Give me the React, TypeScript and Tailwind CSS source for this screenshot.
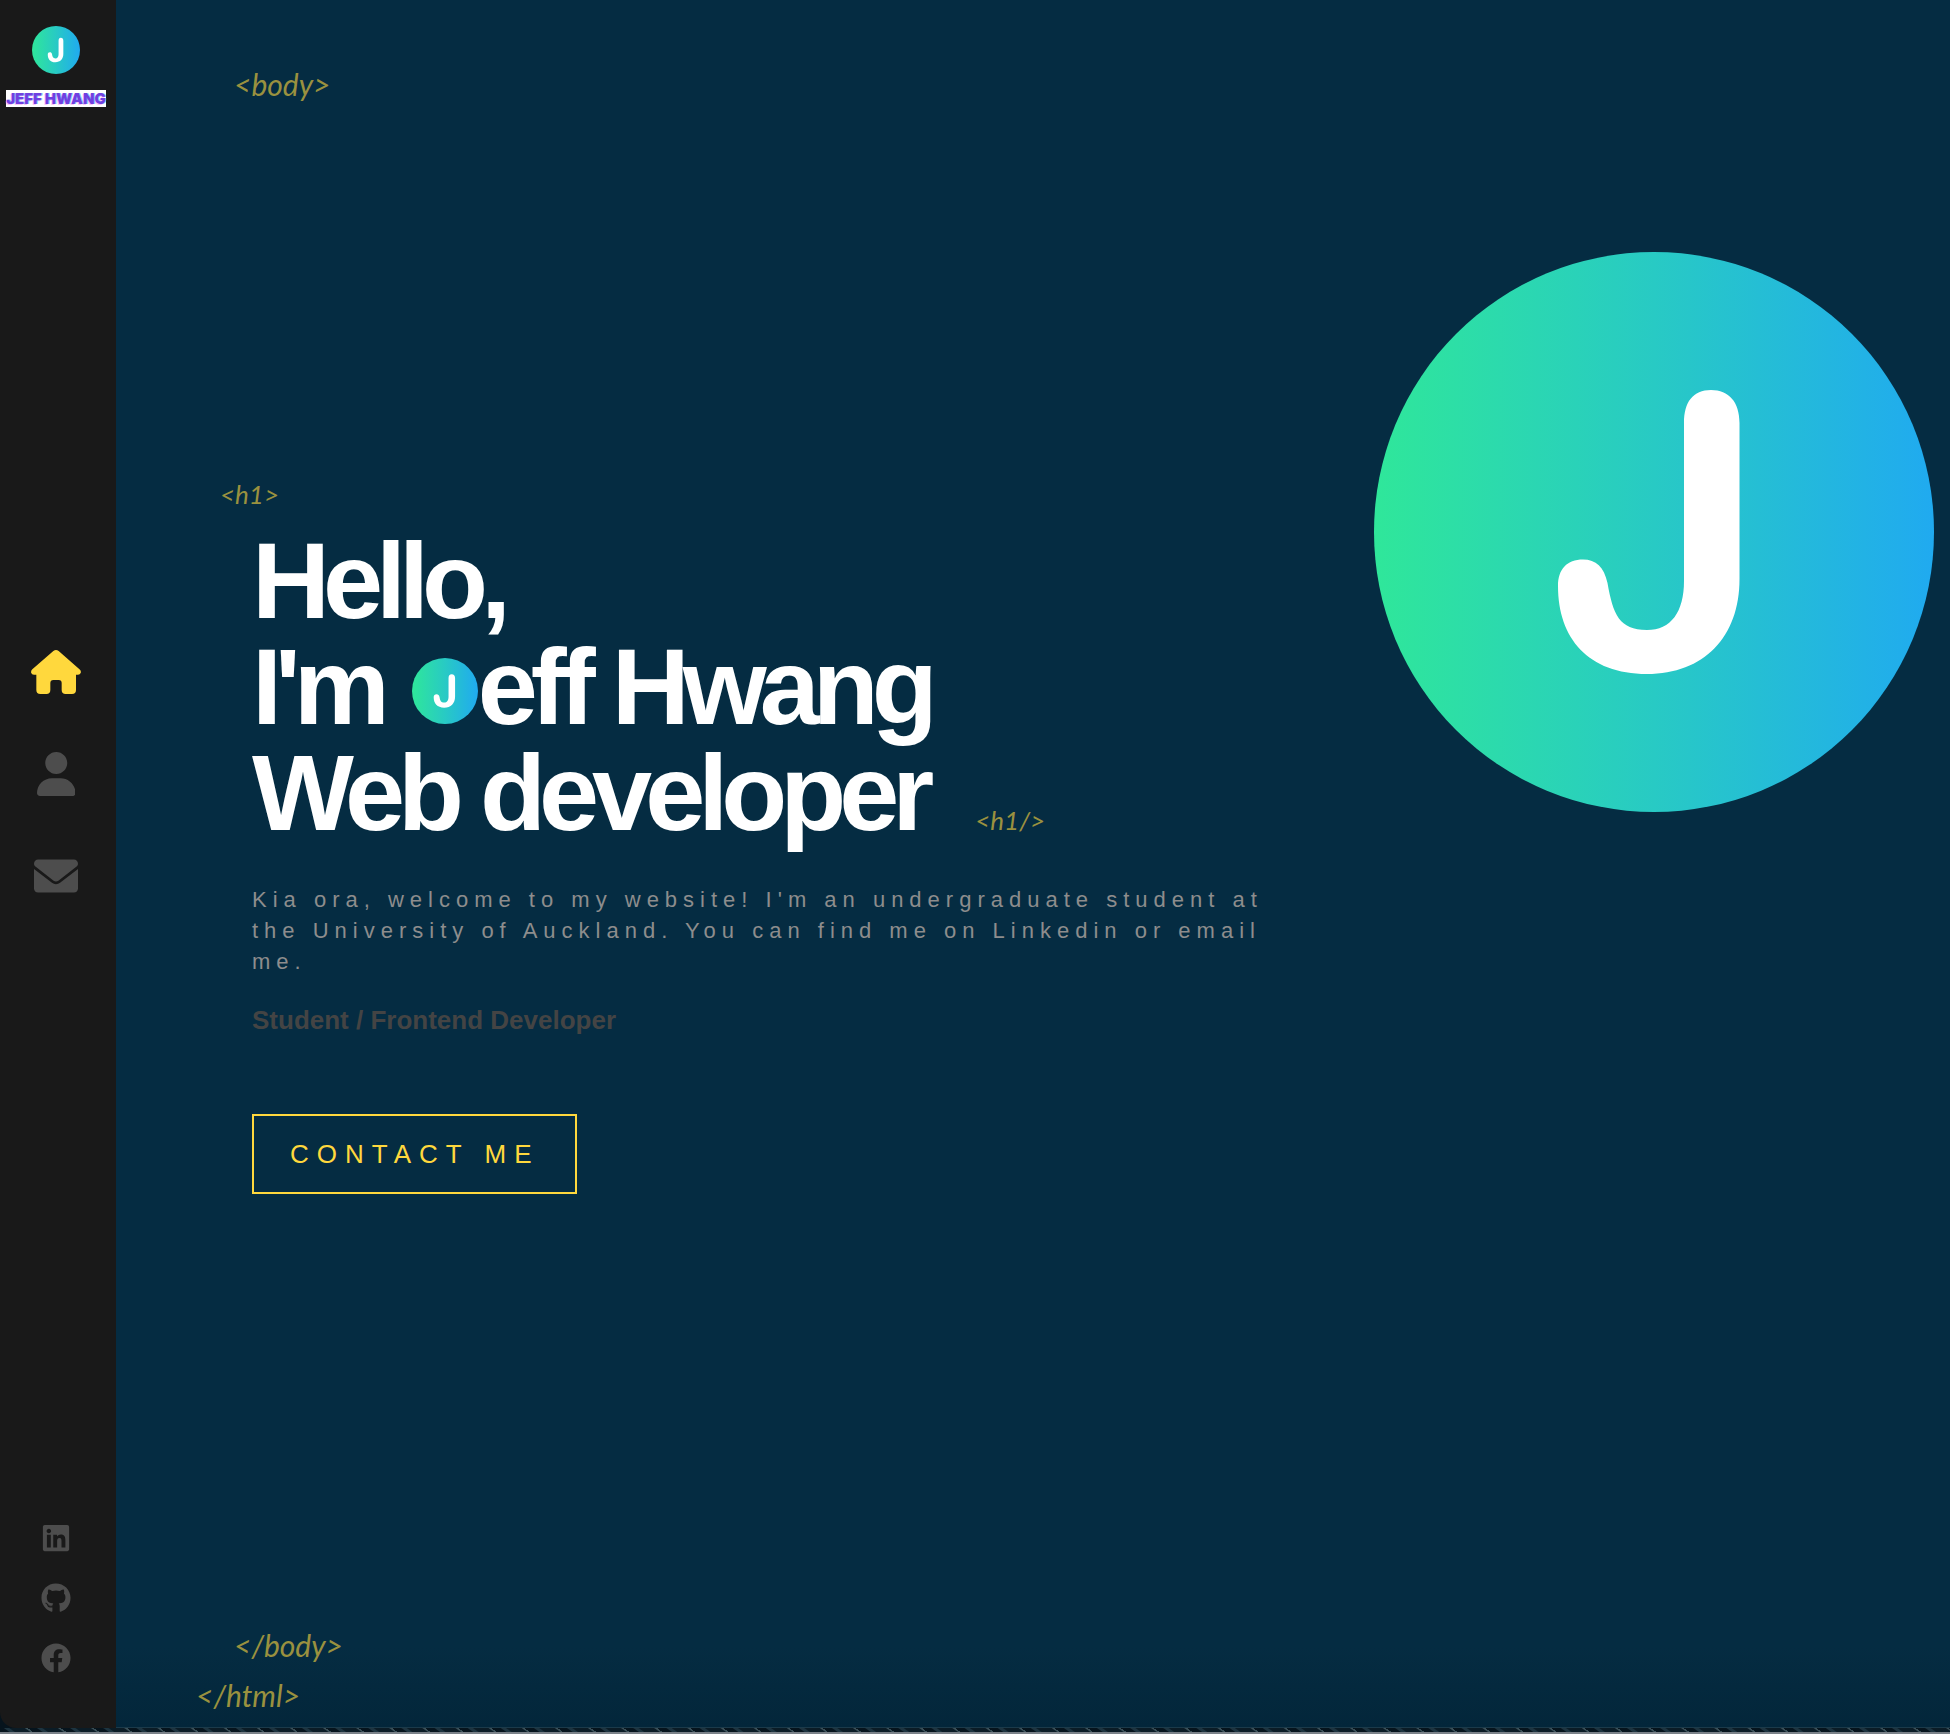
import type { ReactNode } from "react";
import { useId } from "react";
import { FaFacebook, FaGithub, FaLinkedin } from "react-icons/fa";

function Logo({ className }: { className: string }) {
  const id = useId();
  return (
    <svg viewBox="0 0 560 560" role="img" aria-label="J" className={className}>
      <defs>
        <linearGradient id={id} x1="0" y1="0" x2="1" y2="0">
          <stop offset="0" stopColor="#2fe79a" />
          <stop offset="0.5" stopColor="#28cac4" />
          <stop offset="1" stopColor="#20aaf0" />
        </linearGradient>
      </defs>
      <circle cx="280" cy="280" r="280" fill={`url(#${id})`} />
      <path
        fill="#fff"
        d="M337 138C355 138 365.500 150 365.500 171V327C365.500 385 330 422 273 422C214 422 184 386 184 334C184 317 193 307.500 209 307.500C222 307.500 230 315 233.500 331C239 362 245 378 273 378C297 378 310 360 310 329V171C310 150 319 138 337 138Z"
      />
    </svg>
  );
}

function Tag({ children, className = "" }: { children: ReactNode; className?: string }) {
  return (
    <span className={`font-['Lato'] font-normal italic tracking-normal text-[#9a913f] ${className}`}>
      {children}
    </span>
  );
}

const navItems = [
  {
    label: "Home",
    color: "text-[#ffd83d]",
    viewBox: "93 93 150 132",
    path: "M160 96Q168 90 176 96L240 152Q244 157 242 162Q240 167 234 167H228V213Q228 225 216 225H197Q185 225 185 213V192Q185 183 176 183H160Q151 183 151 192V213Q151 225 139 225H121Q109 225 109 213V167H102Q95 167 93.500 161Q92 156 97 151Z",
  },
  {
    label: "About",
    color: "text-[#4d4d4d]",
    viewBox: "0 0 448 512",
    path: "M224 256c70.700 0 128-57.310 128-128S294.700 0 224 0 96 57.310 96 128s57.300 128 128 128zM274.700 304H173.300C77.610 304 0 381.600 0 477.300 0 496.500 15.520 512 34.660 512h378.700C432.500 512 448 496.500 448 477.300 448 381.600 370.400 304 274.700 304z",
  },
  {
    label: "Contact",
    color: "text-[#4d4d4d]",
    viewBox: "0 0 512 512",
    path: "M256 352c-16.530 0-33.060-5.422-47.160-16.410L0 173.200V400c0 26.500 21.490 48 48 48h416c26.510 0 48-21.490 48-48V173.200L303.200 335.600C289.100 346.600 272.500 352 256 352zM16.290 145.300l212.200 165.100c16.190 12.600 38.870 12.600 55.060 0l212.200-165.100C505.100 137.300 512 125 512 112c0-26.510-21.490-48-48-48H48C21.490 64 0 85.490 0 112c0 13 6.010 25.300 16.290 33.300z",
  },
];

const socials = [
  { label: "LinkedIn", Icon: FaLinkedin },
  { label: "GitHub", Icon: FaGithub },
  { label: "Facebook", Icon: FaFacebook },
];

function Sidebar() {
  return (
    <aside className="flex w-[116px] shrink-0 flex-col rounded-bl-2xl bg-[#191919] pr-1">
      <div className="flex flex-1 flex-col">
        <a href="#home" className="flex flex-col items-center gap-4 pt-[26px]">
          <Logo className="size-12" />
          <span className="flex h-[17px] w-[100px] items-center justify-center bg-white font-['Inter'] text-[15px] leading-none font-black whitespace-nowrap text-[#7040e0] [text-shadow:1px_0_0_#38b6ff99,-1px_1px_0_#f06bf066]">
            JEFF HWANG
          </span>
        </a>
      </div>
      <nav className="mb-35 flex flex-col items-center">
        {navItems.map(({ label, color, viewBox, path }) => (
          <a key={label} href={`#${label.toLowerCase()}`} aria-label={label} className={`flex h-[102px] items-center ${color}`}>
            <svg viewBox={viewBox} fill="currentColor" className="h-11 w-auto">
              <path d={path} />
            </svg>
          </a>
        ))}
      </nav>
      <div className="flex flex-1 flex-col items-center justify-end pb-10">
        {socials.map(({ label, Icon }) => (
          <a key={label} href={`#${label.toLowerCase()}`} aria-label={label} className="flex h-[60px] items-center text-[#4d4d4d]">
            <Icon size={30} />
          </a>
        ))}
      </div>
    </aside>
  );
}

export default function App() {
  return (
    <div className="flex min-h-screen flex-col bg-[#06141d] font-['Liberation_Sans',sans-serif]">
      <div className="flex flex-1">
        <Sidebar />
        <main className="flex min-w-0 flex-1 flex-col border-b border-[#1b3a4a] bg-[#052c42] bg-[linear-gradient(to_top,#03263a,transparent_80px)] pt-16 pr-4 pb-3 pl-20">
          <Tag className="ml-[38px] text-[30px] leading-10">&lt;body&gt;</Tag>
          <div className="mt-[148px] flex items-start justify-between gap-8">
            <section className="flex max-w-[1100px] flex-col items-start pt-[222px] pl-14">
              <Tag className="-ml-8 text-[26px] leading-10">&lt;h1&gt;</Tag>
              <h1 className="mt-3.5 text-[108px] leading-[106px] font-bold tracking-[-7px] whitespace-nowrap text-white">
                Hello,
                <br />
                I'm <Logo className="ml-1.5 inline-block size-[66px] align-baseline" />
                eff Hwang
                <br />
                Web developer
                <Tag className="ml-12 text-[26px] leading-10">&lt;h1/&gt;</Tag>
              </h1>
              <p className="mt-[38px] text-[22px] leading-[31px] tracking-[6px] text-[#8d8d8d]">
                Kia ora, welcome to my website! I'm an undergraduate student at the University of Auckland. You can find
                me on Linkedin or email me.
              </p>
              <h2 className="mt-[27px] text-[26px] leading-8 font-bold text-[#444]">Student / Frontend Developer</h2>
              <a
                href="#contact"
                className="mt-[78px] flex h-20 items-center border-2 border-[#ffd83d] px-9 text-[26px] tracking-[8px] text-[#ffd83d]"
              >
                CONTACT ME
              </a>
            </section>
            <Logo className="w-[560px] min-w-0" />
          </div>
          <div className="mt-auto flex flex-col gap-2.5">
            <Tag className="ml-[38px] text-[30px] leading-10">&lt;/body&gt;</Tag>
            <Tag className="text-[30px] leading-10">&lt;/html&gt;</Tag>
          </div>
        </main>
      </div>
      <div className="h-1 bg-[repeating-linear-gradient(35deg,#06141d_0_5px,#1d3440_6px_8px,#0b1c26_9px_17px,#3b5058_18px_19px)]" />
      <div className="h-0.5 bg-[#7b8289]" />
    </div>
  );
}
